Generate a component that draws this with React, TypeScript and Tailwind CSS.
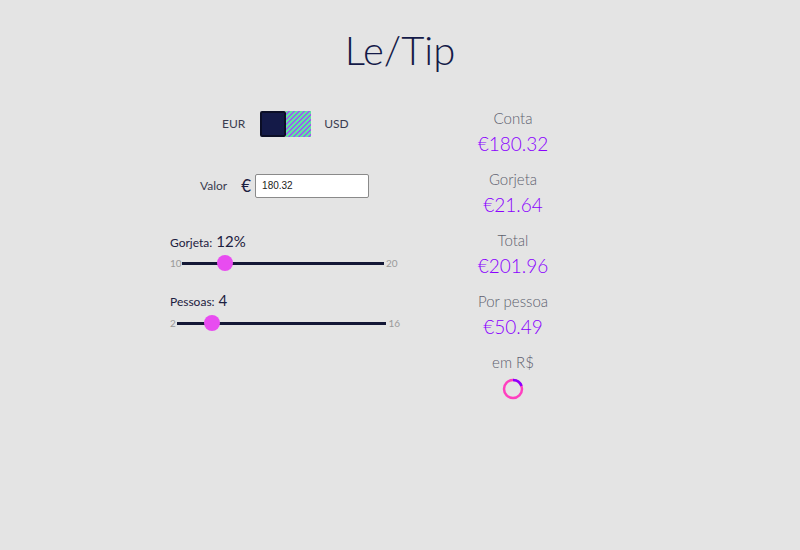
import { useState } from "react";

const font = { fontFamily: "Lato, 'Noto Sans', sans-serif" };

function Slider({
  label,
  value,
  suffix,
  min,
  max,
  trackClass,
  thumbLeft,
}: {
  label: string;
  value: number;
  suffix?: string;
  min: number;
  max: number;
  trackClass: string;
  thumbLeft: string;
}) {
  return (
    <div className="flex flex-col">
      <div className="flex items-baseline gap-1 text-[#1c2040]">
        <span className="text-[12px]">{label}:</span>
        <span className="text-[15px]">
          {value}
          {suffix}
        </span>
      </div>
      <div className="flex items-center mt-[4px]">
        <span className="text-[10px] text-[#9a9a9a] w-[12px]">{min}</span>
        <div className={`relative h-[3px] bg-[#141836] ${trackClass}`}>
          <div className={`absolute top-[-7px] w-[16px] h-[16px] rounded-full bg-[#e84cf0] ${thumbLeft}`} />
        </div>
        <span className="text-[10px] text-[#9a9a9a] ml-[2px]">{max}</span>
      </div>
    </div>
  );
}

function Stat({ label, value }: { label: string; value: string }) {
  return (
    <div className="flex flex-col items-center">
      <span className="text-[15px] text-[#5d5f6e] leading-[20px] font-light">{label}</span>
      <span className="text-[19px] text-[#8a00ff] leading-[24px] mt-[4px] font-light">{value}</span>
    </div>
  );
}

export default function App() {
  const [valor, setValor] = useState("180.32");

  return (
    <div className="w-[800px] h-[550px] bg-[#e4e4e4] flex flex-col items-center" style={font}>
      <h1 className="text-[40px] text-[#141a48] mt-[26px] leading-[48px] font-light">Le/Tip</h1>

      <div className="flex w-full mt-[24px]">
        {/* Lado esquerdo */}
        <div className="w-[400px] flex flex-col pl-[170px]">
          <div className="flex items-center ml-[52px] mt-[13px]">
            <span className="text-[12px] text-[#3a3c50]">EUR</span>
            <div className="flex ml-[15px] w-[51px] h-[26px]">
              <div className="w-[26px] h-[26px] bg-[#141a48] border-2 border-[#0b0e26] rounded-[2px]" />
              <div className="w-[25px] h-[26px] bg-[repeating-linear-gradient(135deg,#62e0a2_0px,#62e0a2_2px,#9b5cf0_2px,#9b5cf0_3.5px)]" />
            </div>
            <span className="text-[12px] text-[#3a3c50] ml-[13px]">USD</span>
          </div>

          <div className="flex items-center ml-[30px] mt-[36px]">
            <span className="text-[12px] text-[#3a3c50]">Valor</span>
            <span className="text-[17px] text-[#1c2040] ml-[14px]">€</span>
            <input
              value={valor}
              onChange={(e) => setValor(e.target.value)}
              className="ml-[4px] w-[114px] h-[24px] bg-white border border-[#8a8a8a] rounded-[2px] px-[6px] text-[10px] text-[#222] outline-none"
              style={{ fontFamily: "'Liberation Sans', Arial, sans-serif" }}
            />
          </div>

          <div className="mt-[31px]">
            <Slider label="Gorjeta" value={12} suffix="%" min={10} max={20} trackClass="w-[202px]" thumbLeft="left-[35px]" />
          </div>
          <div className="mt-[18px]">
            <Slider label="Pessoas" value={4} min={2} max={16} trackClass="w-[210px] -ml-[5px]" thumbLeft="left-[27px]" />
          </div>
        </div>

        {/* Lado direito */}
        <div className="w-[226px] flex flex-col items-center gap-[13px] mt-[10px]">
          <Stat label="Conta" value="€180.32" />
          <Stat label="Gorjeta" value="€21.64" />
          <Stat label="Total" value="€201.96" />
          <Stat label="Por pessoa" value="€50.49" />
          <div className="flex flex-col items-center">
            <span className="text-[15px] text-[#5d5f6e] leading-[20px] font-light">em R$</span>
            <svg width="24" height="24" viewBox="0 0 24 24" className="mt-[5px]">
              <circle cx="12" cy="12" r="9" fill="none" stroke="#ff3fbf" strokeWidth="2.5" />
              <path d="M12 3 A9 9 0 0 1 20.5 9" fill="none" stroke="#8a00ff" strokeWidth="2.5" />
            </svg>
          </div>
        </div>
      </div>
    </div>
  );
}
